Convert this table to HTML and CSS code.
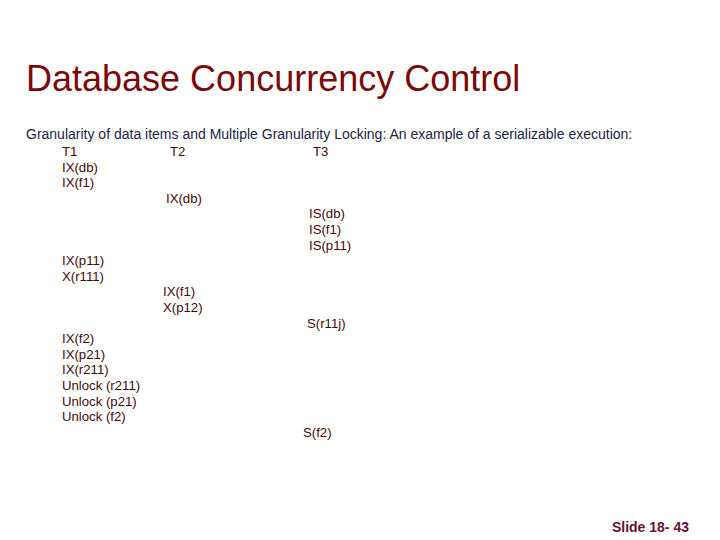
FILE: index.html
```html
<!DOCTYPE html>
<html>
<head>
<meta charset="utf-8">
<link rel="stylesheet" href="styles.css">
</head>
<body>
<div class="slide">
  <h1 class="title">Database Concurrency Control</h1>
  <p class="intro">Granularity of data items and Multiple Granularity Locking: An example of a serializable execution:</p>
  <div class="sched">
    <div class="row"><span class="c1">T1</span><span class="c2 hd">T2</span><span class="c3 hd">T3</span></div>
    <div class="row"><span class="c1">IX(db)</span></div>
    <div class="row"><span class="c1">IX(f1)</span></div>
    <div class="row"><span class="c2">IX(db)</span></div>
    <div class="row"><span class="c3">IS(db)</span></div>
    <div class="row"><span class="c3">IS(f1)</span></div>
    <div class="row"><span class="c3">IS(p11)</span></div>
    <div class="row"><span class="c1">IX(p11)</span></div>
    <div class="row"><span class="c1">X(r111)</span></div>
    <div class="row"><span class="c2 l">IX(f1)</span></div>
    <div class="row"><span class="c2 l">X(p12)</span></div>
    <div class="row"><span class="c3 l">S(r11j)</span></div>
    <div class="row"><span class="c1">IX(f2)</span></div>
    <div class="row"><span class="c1">IX(p21)</span></div>
    <div class="row"><span class="c1">IX(r211)</span></div>
    <div class="row"><span class="c1">Unlock (r211)</span></div>
    <div class="row"><span class="c1">Unlock (p21)</span></div>
    <div class="row"><span class="c1">Unlock (f2)</span></div>
    <div class="row"><span class="c3 ll">S(f2)</span></div>
  </div>
  <div class="footer">Slide 18- 43</div>
</div>
</body>
</html>
```
FILE: styles.css
```css
html, body {
  margin: 0;
  padding: 0;
  background: #ffffff;
}
.slide {
  width: 720px;
  height: 540px;
  box-sizing: border-box;
  padding: 57px 0 0 26px;
  font-family: "Liberation Sans", Arial, sans-serif;
  display: flex;
  flex-direction: column;
}
.title {
  margin: 0;
  font-weight: normal;
  font-size: 36px;
  line-height: 44px;
  color: #7a0a0a;
}
.intro {
  margin: 25px 0 0 0;
  font-size: 14px;
  line-height: 16px;
  color: #23233f;
}
.sched {
  margin: 2px 0 0 36px;
  font-size: 13.2px;
  color: #3f0a0a;
}
.row {
  display: grid;
  grid-template-columns: 104px 143px auto;
  height: 15.6px;
  line-height: 15.6px;
}
.c1 { grid-column: 1; }
.c2 { grid-column: 2; }
.c3 { grid-column: 3; }
.hd { padding-left: 4px; }
.c2.l { margin-left: -3px; }
.c3.l { margin-left: -2px; }
.c3.ll { margin-left: -6px; }
.footer {
  margin-top: auto;
  align-self: flex-end;
  margin-right: 31px;
  margin-bottom: 5px;
  font-size: 14px;
  font-weight: bold;
  color: #6b1038;
}
```
